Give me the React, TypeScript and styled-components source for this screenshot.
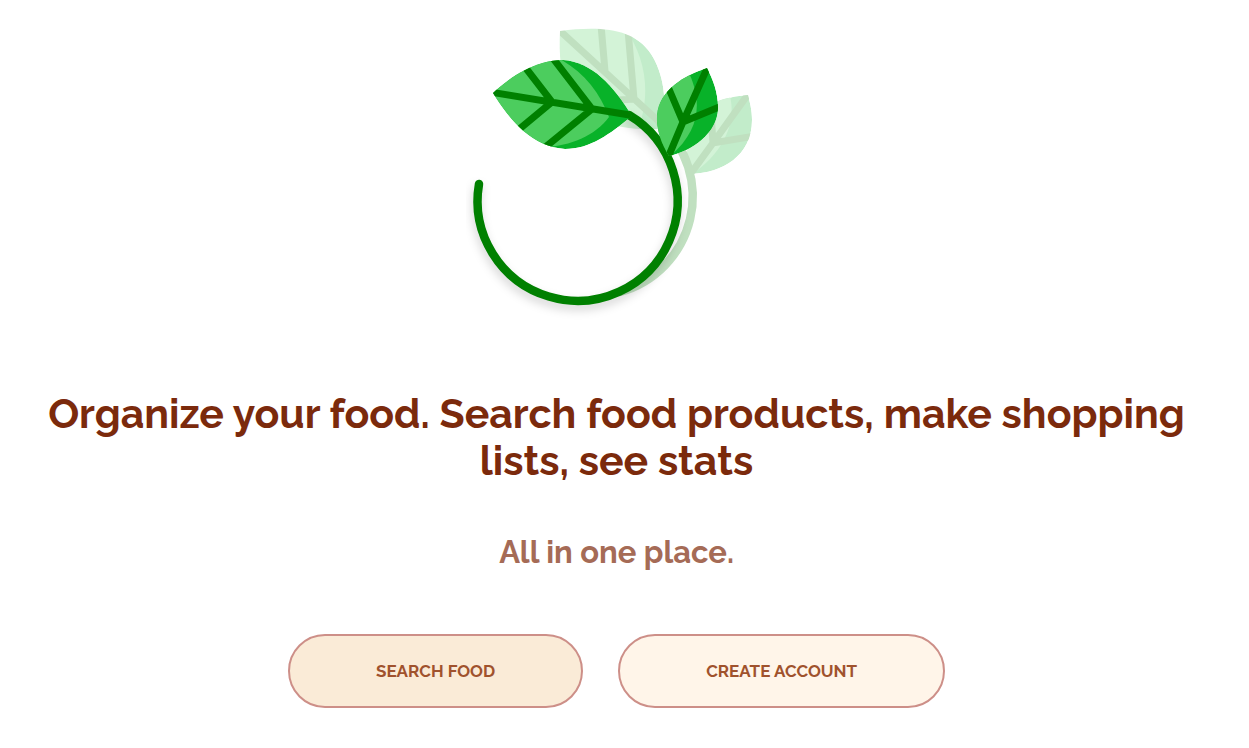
import React from "react";
import styled, { createGlobalStyle } from "styled-components";

const GlobalStyle = createGlobalStyle`
  body {
    margin: 0;
    background: #fff;
    font-family: Raleway, Lato, "Open Sans", sans-serif;
  }
`;

const Page = styled.main`
  display: flex;
  flex-direction: column;
  align-items: center;
  padding: 20px 16px 40px 0;
  text-align: center;
`;

const Logo = styled.svg`
  display: block;
  width: 301px;
  height: 300px;
`;

const Title = styled.h1`
  margin: 70px 32px 0;
  color: #7b2a0c;
  font-size: 41px;
  line-height: 47px;
  font-weight: 700;
`;

const Subtitle = styled.h2`
  margin: 50px 32px 0;
  color: #a56b56;
  font-size: 31px;
  line-height: 36px;
  font-weight: 700;
`;

const Actions = styled.div`
  display: flex;
  flex-wrap: wrap;
  justify-content: center;
  gap: 35px;
  margin-top: 64px;
`;

const ActionButton = styled.button<{ $primary?: boolean }>`
  padding: 25px 86px;
  border: 2px solid #cd8f88;
  border-radius: 37px;
  background: ${(p) => (p.$primary ? "#faebd7" : "#fff5e9")};
  color: #a0522d;
  font-family: inherit;
  font-size: 17px;
  line-height: 20px;
  font-weight: 700;
  text-transform: uppercase;
  cursor: pointer;
`;

const Ring = styled.path`
  fill: none;
  stroke: #008000;
  stroke-width: 8.5;
  stroke-linecap: round;
`;

const MainRing = styled(Ring)`
  filter: drop-shadow(-1px 5px 5px rgba(0, 0, 0, 0.16));
`;

type LeafProps = { id: string; outline: string; light: string; veins: string };

function Leaf({ id, outline, light, veins }: LeafProps) {
  return (
    <g clipPath={`url(#${id})`}>
      <clipPath id={id}>
        <path d={outline} />
      </clipPath>
      <path d={outline} fill="#08b229" />
      <path d={light} fill="#4ccd5e" />
      <path d={veins} fill="none" stroke="#008000" strokeWidth="7" />
    </g>
  );
}

function PlantLogo() {
  return (
    <Logo viewBox="466 20 301 300" role="img" aria-label="Leaves logo">
      <g opacity="0.25">
        <Leaf
          id="back-large"
          outline="M560 31C600 26 634 28 651 54C663 72 669 103 660 129C615 131 585 120 570 95C560 75 559 55 560 31Z"
          light="M550 20H619C645 52 653 92 637 132H550Z"
          veins="M558 29L666 128M601 25L605 71M628 30L634 99L590 102"
        />
        <Leaf
          id="back-small"
          outline="M748 95C736 96 725 98 716 102C698 112 679 142 691 174C722 173 752 156 752 120C752 110 750 103 748 95Z"
          light="M680 90H728C738 116 728 150 691 175H670Z"
          veins="M749 93L713 143L689 176M755 136L713 143L710 98"
        />
        <Ring d="M660 123A99 99 0 0 1 620 292" />
      </g>
      <MainRing d="M479 184A100 100 0 1 0 629 115" />
      <Leaf
        id="front-large"
        outline="M493 93C511 76 536 60 563 60C592 62 613 85 632 116C610 134 590 149 565 149C533 147 511 122 493 93Z"
        light="M485 50H540C575 62 598 87 609 117C595 136 570 146 545 147L520 155H485Z"
        veins="M490 92L636 116M525 67L552 102L517 131M552 57L592 109L543 149"
      />
      <Leaf
        id="front-small"
        outline="M707 68C685 75 659 90 657 115C656 130 662 145 669 156C692 151 718 133 718 108C718 92 713 80 707 68Z"
        light="M650 65H685C702 96 704 128 669 157H650Z"
        veins="M709 64L683 122L667 160M666 82L683 122L724 105"
      />
    </Logo>
  );
}

export default function App() {
  return (
    <>
      <GlobalStyle />
      <Page>
        <PlantLogo />
        <Title>
          Organize your food. Search food products, make shopping lists, see stats
        </Title>
        <Subtitle>All in one place.</Subtitle>
        <Actions>
          <ActionButton type="button" $primary>
            Search food
          </ActionButton>
          <ActionButton type="button">Create account</ActionButton>
        </Actions>
      </Page>
    </>
  );
}
